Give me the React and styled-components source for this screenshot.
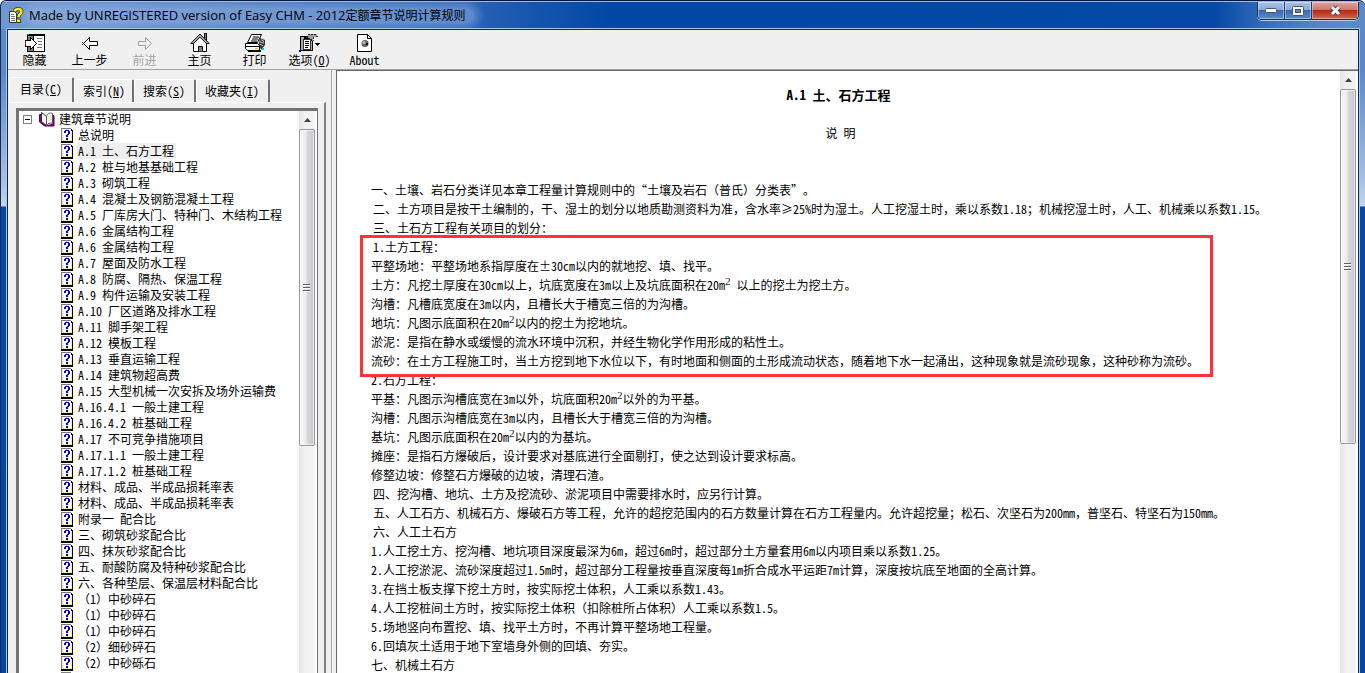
import { Fragment } from 'react'
import styled, { createGlobalStyle, css } from 'styled-components'

const GlobalStyle = createGlobalStyle`
  *,
  *::after {
    box-sizing: border-box;
  }
  body {
    margin: 0;
    overflow: hidden;
    color: #000;
    font-family: 'Noto Sans CJK SC', sans-serif;
    font-size: 12px;
    text-spacing-trim: space-all;
  }
  button {
    padding: 0;
    border: 0;
    background: none;
    color: inherit;
    font: inherit;
  }
  svg {
    display: block;
    flex: none;
  }
`

// half-width latin letters and digits, two per chinese character
const Half = styled.span`
  font-feature-settings: 'hwid';
`

const Window = styled.div`
  display: flex;
  flex-direction: column;
  height: 100vh;
  overflow: hidden;
  padding: 0 5px 0 1px;
  border-top: 1px solid #06163c;
  border-left: 1px solid #1b2a4c;
  border-radius: 6px 6px 0 0;
  background:
    linear-gradient(90deg, #6f97d2 0, #557fc4 14%, #2a62b6 34%, #0047a6 45%, #0449a6 89%, #3a70bc 93%, #5a86c8 97%, #5c89cb 100%) 0 0 / 100% 28px no-repeat,
    linear-gradient(180deg, #5b88ca 0, #5b88ca 70px, #a8c0e2 180px, #c4d5ee 205px, #0648a8 206px, #0046a6 100%);
`

const TitleBar = styled.header`
  display: flex;
  flex: none;
  height: 27px;
  padding: 0 1px 0 6px;
  border-top: 1px solid #9db9e4;
`

const Title = styled.h1`
  flex: 1;
  display: flex;
  align-items: center;
  gap: 4px;
  margin: 0;
  font-family: 'Open Sans', 'Noto Sans CJK SC', sans-serif;
  font-size: 13px;
  font-weight: 400;
`

const TitleText = styled.span`
  padding: 0 8px 0 1px;
  border-radius: 10px;
  background: rgba(170, 198, 236, 0.42);
  box-shadow: 0 0 10px 5px rgba(170, 198, 236, 0.42);
  line-height: 14px;
  small {
    font-size: 12px;
  }
`

const WindowButtons = styled.div`
  display: flex;
  height: 18px;
  border: 1px solid #16305e;
  border-top: 0;
  border-radius: 0 0 5px 5px;
  overflow: hidden;
  box-shadow: 0 1px 0 #b5cbea;
`

const WindowButton = styled.button`
  display: flex;
  align-items: center;
  justify-content: center;
  width: ${({ $close }) => ($close ? 46 : 27)}px;
  border-right: 1px solid #1f3d70;
  background: linear-gradient(180deg, #a9c0e2 0, #8aa9d6 48%, #3a68ae 50%, #5c8bcf 100%);
  box-shadow: inset 0 0 0 1px rgba(255, 255, 255, 0.4);
  ${({ $close }) => $close && css`
    border-right: 0;
    background: linear-gradient(180deg, #e0a49b 0, #cf7467 48%, #b22a18 50%, #d4684d 100%);
  `}
`

const Client = styled.div`
  flex: 1;
  min-height: 0;
  display: flex;
  flex-direction: column;
  margin-left: 4px;
  border: 1px solid #a9c6ec;
  border-bottom: 0;
  background: #f0f0f0;
`

const ClientInner = styled.div`
  flex: 1;
  min-height: 0;
  display: flex;
  flex-direction: column;
  border: 1px solid #0d2759;
  border-bottom: 0;
`

const Toolbar = styled.nav`
  display: flex;
  flex: none;
  gap: 2px;
  height: 40px;
  border-bottom: 1px solid #a0a0a0;
`

const ToolButton = styled.button`
  display: flex;
  flex-direction: column;
  align-items: center;
  width: 53px;
  padding-top: 3px;
  line-height: 14px;
  white-space: nowrap;
  &:disabled {
    color: #a0a0a0;
    text-shadow: 1px 1px 0 #fff;
  }
`

const Main = styled.div`
  flex: 1;
  min-height: 0;
  display: flex;
`

const Sidebar = styled.aside`
  flex: none;
  display: flex;
  flex-direction: column;
  width: 324px;
  padding: 7px 5px 0 1px;
  border-right: 1px solid #a0a0a0;
`

const Tabs = styled.div`
  display: flex;
  flex: none;
  align-items: flex-end;
  height: 25px;
`

const Tab = styled.button`
  height: ${({ $active }) => ($active ? 25 : 23)}px;
  padding: 0 8px ${({ $active }) => ($active ? 4 : 2)}px;
  width: ${({ $width }) => $width}px;
  text-align: left;
  white-space: nowrap;
  border-top: 1px solid #fff;
  border-left: 1px solid #fff;
  border-right: 2px solid #707070;
  border-radius: 2px 2px 0 0;
  ${({ $active }) => $active && css`padding-left: 10px;`}
`

const TabPanel = styled.section`
  flex: 1;
  min-height: 0;
  display: flex;
  padding: 5px 6px 0 7px;
  border-top: 1px solid #fff;
  border-right: 2px solid #808080;
`

const TreeBox = styled.div`
  flex: 1;
  min-width: 0;
  display: flex;
  overflow: hidden;
  border: solid #747474;
  border-width: 3px 1px 0 3px;
  padding-right: 2px;
  background: #fff;
`

const Tree = styled.ul`
  flex: 1;
  min-width: 0;
  margin: 0;
  padding: 0;
  list-style: none;
`

const TreeRow = styled.li`
  display: flex;
  align-items: center;
  gap: ${({ $root }) => ($root ? 4 : 3)}px;
  height: 16px;
  padding-left: ${({ $root }) => ($root ? 4 : 42)}px;
  line-height: 16px;
  white-space: nowrap;
`

const TreeLabel = styled.span`
  padding: 0 2px 0 ${({ $root }) => ($root ? 0 : 1)}px;
  background: ${({ $selected }) => ($selected ? '#efefef' : 'transparent')};
`

const ScrollTrack = styled.div`
  flex: none;
  display: flex;
  flex-direction: column;
  width: 16px;
  background: linear-gradient(90deg, #e6e6e6, #f2f2f2 40%, #f4f4f4);
`

const ScrollArrow = styled.button`
  display: flex;
  align-items: center;
  justify-content: center;
  height: 18px;
`

const ScrollThumb = styled.div`
  display: flex;
  align-items: center;
  justify-content: center;
  height: ${({ $size }) => $size}px;
  border: 1px solid #979797;
  border-radius: 2px;
  background: linear-gradient(90deg, #f8f8f8 0, #ececec 40%, #d6d6da 55%, #c6c6cc 100%);
  box-shadow: inset 0 0 0 1px rgba(255, 255, 255, 0.6);
`

const Splitter = styled.div`
  flex: none;
  width: 4px;
  border-left: 1px solid #fff;
`

const Viewer = styled.div`
  flex: 1;
  min-width: 0;
  display: flex;
  border: solid #696969;
  border-width: 1px 0 0 1px;
  padding-right: 2px;
  background: #fff;
`

const Article = styled.article`
  flex: 1;
  min-width: 0;
  padding: 14px 34px 0;
  overflow: hidden;
  line-height: 19px;
`

const Heading = styled.h2`
  margin: 0 0 19px;
  font-size: 13px;
  font-weight: 700;
  line-height: 19px;
  text-align: center;
`

const SubHeading = styled.p`
  margin: 0 0 38px;
  padding-left: 4px;
  text-align: center;
`

const Line = styled.p`
  margin: 0;
  padding-left: ${({ $indent }) => ($indent ? 2 : 0)}px;
  white-space: nowrap;
  sup {
    color: #2c1c1c;
    font-family: 'Liberation Serif', serif;
    font-size: 11px;
    line-height: 0;
  }
`

const Marked = styled.div`
  position: relative;
  &::after {
    content: '';
    position: absolute;
    top: -2px;
    left: -11px;
    width: 853px;
    height: 142px;
    border: 3px solid #fb3535;
    pointer-events: none;
  }
`

const topics = [
  '总说明',
  'A.1 土、石方工程',
  'A.2 桩与地基基础工程',
  'A.3 砌筑工程',
  'A.4 混凝土及钢筋混凝土工程',
  'A.5 厂库房大门、特种门、木结构工程',
  'A.6 金属结构工程',
  'A.6 金属结构工程',
  'A.7 屋面及防水工程',
  'A.8 防腐、隔热、保温工程',
  'A.9 构件运输及安装工程',
  'A.10 厂区道路及排水工程',
  'A.11 脚手架工程',
  'A.12 模板工程',
  'A.13 垂直运输工程',
  'A.14 建筑物超高费',
  'A.15 大型机械一次安拆及场外运输费',
  'A.16.4.1 一般土建工程',
  'A.16.4.2 桩基础工程',
  'A.17 不可竞争措施项目',
  'A.17.1.1 一般土建工程',
  'A.17.1.2 桩基础工程',
  '材料、成品、半成品损耗率表',
  '材料、成品、半成品损耗率表',
  '附录一 配合比',
  '三、砌筑砂浆配合比',
  '四、抹灰砂浆配合比',
  '五、耐酸防腐及特种砂浆配合比',
  '六、各种垫层、保温层材料配合比',
  '（1）中砂碎石',
  '（1）中砂碎石',
  '（1）中砂碎石',
  '（2）细砂碎石',
  '（2）中砂砾石',
  '',
]

// '^2' becomes a superscript, a leading '>' indents the line
const intro = [
  '一、土壤、岩石分类详见本章工程量计算规则中的“土壤及岩石（普氏）分类表”。',
  '>二、土方项目是按干土编制的，干、湿土的划分以地质勘测资料为准，含水率≥25%时为湿土。人工挖湿土时，乘以系数1.18；机械挖湿土时，人工、机械乘以系数1.15。',
  '>三、土石方工程有关项目的划分：',
]

const marked = [
  '>1.土方工程：',
  '平整场地：平整场地系指厚度在±30cm以内的就地挖、填、找平。',
  '土方：凡挖土厚度在30cm以上，坑底宽度在3m以上及坑底面积在20m^2 以上的挖土为挖土方。',
  '沟槽：凡槽底宽度在3m以内，且槽长大于槽宽三倍的为沟槽。',
  '地坑：凡图示底面积在20m^2以内的挖土为挖地坑。',
  '淤泥：是指在静水或缓慢的流水环境中沉积，并经生物化学作用形成的粘性土。',
  '流砂：在土方工程施工时，当土方挖到地下水位以下，有时地面和侧面的土形成流动状态，随着地下水一起涌出，这种现象就是流砂现象，这种砂称为流砂。',
]

const rest = [
  '2.石方工程：',
  '平基：凡图示沟槽底宽在3m以外，坑底面积20m^2以外的为平基。',
  '沟槽：凡图示沟槽底宽在3m以内，且槽长大于槽宽三倍的为沟槽。',
  '基坑：凡图示底面积在20m^2以内的为基坑。',
  '摊座：是指石方爆破后，设计要求对基底进行全面剔打，使之达到设计要求标高。',
  '修整边坡：修整石方爆破的边坡，清理石渣。',
  '>四、挖沟槽、地坑、土方及挖流砂、淤泥项目中需要排水时，应另行计算。',
  '>五、人工石方、机械石方、爆破石方等工程，允许的超挖范围内的石方数量计算在石方工程量内。允许超挖量；松石、次坚石为200mm，普坚石、特坚石为150mm。',
  '>六、人工土石方',
  '1.人工挖土方、挖沟槽、地坑项目深度最深为6m，超过6m时，超过部分土方量套用6m以内项目乘以系数1.25。',
  '2.人工挖淤泥、流砂深度超过1.5m时，超过部分工程量按垂直深度每1m折合成水平运距7m计算，深度按坑底至地面的全高计算。',
  '3.在挡土板支撑下挖土方时，按实际挖土体积，人工乘以系数1.43。',
  '4.人工挖桩间土方时，按实际挖土体积（扣除桩所占体积）人工乘以系数1.5。',
  '5.场地竖向布置挖、填、找平土方时，不再计算平整场地工程量。',
  '6.回填灰土适用于地下室墙身外侧的回填、夯实。',
  '七、机械土石方',
]

const tabs = [
  { text: '目录', accel: 'C', width: 65, active: true },
  { text: '索引', accel: 'N', width: 60 },
  { text: '搜索', accel: 'S', width: 62 },
  { text: '收藏夹', accel: 'I', width: 74 },
]

const AppIcon = () => (
  <svg width="16" height="16" viewBox="0 0 16 16">
    <path d="M1.500 4.500h5l2 2v9h-7z" fill="#fff" stroke="#333" />
    <path d="M3 7.500h3M3 9.500h4M3 11.500h4M3 13.500h4" stroke="#777" />
    <path d="M6.500 4C7.500 2 9 1.800 11 2c2.500.5 3 2.500 2 4-1 1.500-2.500 1.500-2.500 4.500" fill="none" stroke="#3a3500" strokeWidth="4" />
    <path d="M6.500 4C7.500 2 9 1.800 11 2c2.500.5 3 2.500 2 4-1 1.500-2.500 1.500-2.500 4" fill="none" stroke="#ffee1a" strokeWidth="2.500" />
    <path d="M8.500 12h4v3.500h-4z" fill="#ffee1a" stroke="#3a3500" />
  </svg>
)

const HideIcon = () => (
  <svg width="20" height="20" viewBox="0 0 20 20" shapeRendering="crispEdges">
    <path d="M2 1h18v18H2z" fill="#000" />
    <path d="M3 3h5v15H3z" fill="#808080" />
    <path d="M9 3h10v15H9z" fill="#fff" />
    <path d="M12 5.500h5M13 8.500h4M13 11.500h4M12 14.500h5" stroke="#777" />
    <path d="M0 7h5V4h1v1h1v1h1v1h1v1h1v1h1v1h1v1h-1v1h-1v1H9v1H8v1H7v1H6v1H5v-3H0z" fill="#000" />
    <path d="M1 8h5V6h1v1h1v1h1v1h1v1h1v1h-1v1H9v1H8v1H7v1H6v-2H1z" fill="#fff" />
    <path d="M2 1h2v1H2z" fill="#008000" />
    <path d="M0 8h1v4H0z" fill="#c00000" />
  </svg>
)

const ArrowIcon = ({ forward }) => (
  <svg width="20" height="20" viewBox="0 -1 20 20">
    {forward ? (
      <>
        <path d="M4 8.500h7v-4l6.500 6-6.500 6v-4H4z" fill="none" stroke="#fff" />
        <path d="M3.500 7.500h7v-4l6 6-6 6v-4h-7z" fill="#f0f0f0" stroke="#a0a0a0" />
      </>
    ) : (
      <>
        <path d="M17.500 7.500h-8v-4L3.500 9.500l6 6v-4h8z" fill="#fff" stroke="#000" />
        <path d="M2 8h1v1H2zM2 10h1v1H2z" fill="#c00000" />
        <path d="M3 9h1v1H3z" fill="#008000" />
      </>
    )}
  </svg>
)

const HomeIcon = () => (
  <svg width="20" height="20" viewBox="0 0 20 20">
    <path d="M14.500 .5h2v8l-2-2z" fill="#808080" stroke="#000" />
    <path d="M3.500 10v8.500h13V10L10 3.500z" fill="#fff" stroke="#000" />
    <path d="M.7 10.500L10 1l9.300 9.500h-3L10 4.200 3.700 10.500z" fill="#a8a8a8" stroke="#000" strokeWidth="0.900" />
    <path d="M8.500 18.500v-5h4v5" fill="#808080" stroke="#000" />
  </svg>
)

const PrintIcon = () => (
  <svg width="20" height="20" viewBox="0 0 20 20">
    <path d="M6.500 1.500h10l-4 8h-10z" fill="#fff" stroke="#000" />
    <path d="M8 4h6M7 6h6M6 8h6" stroke="#000" />
    <path d="M15 5l5 2v5l-4 5-2-6z" fill="#333" />
    <path d="M16 6.500l3 2M15 9l4 1M15 11.500l3 1" stroke="#ccc" />
    <path d="M.5 10.500h12l2 2v5h-12l-2-2z" fill="#fff" stroke="#000" />
    <path d="M1 13.500h13" stroke="#000" />
    <path d="M3 18h13" stroke="#000" strokeWidth="2" />
    <path d="M17 15h2v2h-2z" fill="#00d0d0" />
    <path d="M10 15h3v1h-3z" fill="#d0d000" />
  </svg>
)

const OptionsIcon = () => (
  <svg width="22" height="20" viewBox="0 0 22 20" shapeRendering="crispEdges">
    <path d="M1 3h13v15H1z" fill="#000" />
    <path d="M2 4h11v13H2z" fill="#a8a8a8" />
    <path d="M4 6h7v10H4z" fill="#fff" stroke="#333" />
    <path d="M5 4h5v2H5z" fill="#000" />
    <path d="M6 8.500h4M6 10.500h4M6 12.500h4M6 14.500h3" stroke="#000" />
    <path d="M9 1h9v3h-3l-1 4-2-1V5H9z" fill="#a0a0a0" />
    <path d="M9 1.500h9M9 5.500h3M12.500 6v2M14.500 4v4M17 3.500h2" stroke="#222" strokeDasharray="2 1" />
    <path d="M0 17h2v2H0z" fill="#0000c0" />
    <path d="M16 10h5v1h-1v1h-1v1h-1v-1h-1v-1h-1z" fill="#000" />
  </svg>
)

const AboutIcon = () => (
  <svg width="20" height="20" viewBox="0 0 20 20">
    <path d="M2.500 1.500h10l4 4v13h-14z" fill="#fff" stroke="#000" />
    <path d="M12.500 1.500v4h4" fill="none" stroke="#000" />
    <circle cx="10" cy="10.500" r="3.500" fill="#606060" />
    <circle cx="9" cy="9.500" r="1.500" fill="#c0c0c0" />
    <path d="M11 10h2v2h-2z" fill="#111" />
  </svg>
)

const BookIcon = () => (
  <svg width="16" height="16" viewBox="0 0 16 16">
    <path d="M.5 3.500h2v8.500l5 2.500 6-1V4.500h1.500v10.500H5.500l-5-4z" fill="#800080" stroke="#600060" />
    <path d="M2.500 1.500l5 4v9l-5-4z" fill="#fff" stroke="#333" />
    <path d="M7.500 5.500c1-3 3-4 6-3v10c-3-1-5 0-6 2z" fill="#fff" stroke="#555" />
    <path d="M10 5v6M12 4v7" stroke="#d8d060" strokeDasharray="1 1" />
  </svg>
)

const TopicIcon = () => (
  <svg width="13" height="15" viewBox="0 0 13 15" shapeRendering="crispEdges">
    <path d="M0 0h10v1h1v1h1v12.500H0z" fill="#000" />
    <path d="M0 0h10v1H1v12H0z" fill="#808080" />
    <path d="M1 1h9v2h1v10H1z" fill="#fff" />
    <path d="M1 1.500h8M2 12.500h9M1.500 3v10M10.500 4v8" stroke="#f0e060" strokeDasharray="1 1" />
    <path d="M4 2h4v1H4zM3 3h2v2H3zM7 3h2v3H7zM6 6h2v1H6zM5 7h2v2H5zM5 10h2v2H5z" fill="#0000f0" />
  </svg>
)

const MinusBox = () => (
  <svg width="12" height="9" viewBox="0 0 12 9" shapeRendering="crispEdges">
    <rect x="0.500" y="0.500" width="8" height="8" fill="#fff" stroke="#808080" />
    <path d="M2 4.500h5" stroke="#000" />
  </svg>
)

const Accel = ({ letter }) => <Half>(<u>{letter}</u>)</Half>

const toolButtons = [
  { label: '隐藏', icon: <HideIcon /> },
  { label: '上一步', icon: <ArrowIcon /> },
  { label: '前进', icon: <ArrowIcon forward />, disabled: true },
  { label: '主页', icon: <HomeIcon /> },
  { label: '打印', icon: <PrintIcon /> },
  { label: <>选项<Accel letter="O" /></>, icon: <OptionsIcon /> },
  { label: <Half>About</Half>, icon: <AboutIcon /> },
]

const Scrollbar = ({ size }) => (
  <ScrollTrack>
    <ScrollArrow aria-label="Scroll up">
      <svg width="7" height="4" viewBox="0 0 7 4">
        <path d="M0 4l3.500-4L7 4z" fill="#404040" />
      </svg>
    </ScrollArrow>
    <ScrollThumb $size={size}>
      <svg width="8" height="8" viewBox="0 0 8 8" shapeRendering="crispEdges">
        <path d="M0 1.500h7M0 4.500h7M0 7.500h7" stroke="#fff" />
        <path d="M0 .5h7M0 3.500h7M0 6.500h7" stroke="#606060" />
      </svg>
    </ScrollThumb>
  </ScrollTrack>
)

const Text = ({ children }) => children.split(/([\x20-\x7e]+)/).map((run, i) => (
  i % 2 ? <Half key={i}>{run}</Half> : run
))

const Lines = ({ items }) => items.map((item, i) => {
  const parts = item.replace(/^>/, '').split('^2')

  return (
    <Line key={i} $indent={item.startsWith('>')}>
      {parts.map((part, j) => (
        <Fragment key={j}>
          {j > 0 && <sup>2</sup>}
          <Text>{part}</Text>
        </Fragment>
      ))}
    </Line>
  )
})

export default function App() {
  return (
    <>
      <GlobalStyle />
      <Window>
        <TitleBar>
          <Title>
            <AppIcon />
            <TitleText>
              Made by UNREGISTERED version of Easy CHM - 2012<small>定额章节说明计算规则</small>
            </TitleText>
          </Title>
          <WindowButtons>
            <WindowButton aria-label="Minimize">
              <svg width="12" height="5" viewBox="0 0 12 5">
                <rect x="0.500" y="0.500" width="11" height="4" rx="1" fill="#fff" stroke="#4a5468" />
              </svg>
            </WindowButton>
            <WindowButton aria-label="Maximize">
              <svg width="12" height="10" viewBox="0 0 12 10">
                <rect x="0.500" y="0.500" width="11" height="9" rx="1" fill="#fff" stroke="#4a5468" />
                <rect x="3.500" y="3.500" width="5" height="3" fill="#5c86c4" stroke="#4a5468" />
              </svg>
            </WindowButton>
            <WindowButton $close aria-label="Close">
              <svg width="13" height="11" viewBox="0 0 13 11">
                <path d="M3 2l7 7M10 2L3 9" stroke="#5a3c44" strokeWidth="5" />
                <path d="M3 2l7 7M10 2L3 9" stroke="#fff" strokeWidth="3" />
              </svg>
            </WindowButton>
          </WindowButtons>
        </TitleBar>
        <Client>
          <ClientInner>
            <Toolbar>
              {toolButtons.map(({ label, icon, disabled }, i) => (
                <ToolButton key={i} disabled={disabled}>
                  {icon}
                  <span>{label}</span>
                </ToolButton>
              ))}
            </Toolbar>
            <Main>
              <Sidebar>
                <Tabs role="tablist">
                  {tabs.map(({ text, accel, width, active }) => (
                    <Tab key={text} role="tab" aria-selected={!!active} $active={active} $width={width}>
                      {text}<Accel letter={accel} />
                    </Tab>
                  ))}
                </Tabs>
                <TabPanel>
                  <TreeBox>
                    <Tree>
                      <TreeRow $root>
                        <MinusBox />
                        <BookIcon />
                        <TreeLabel $root>建筑章节说明</TreeLabel>
                      </TreeRow>
                      {topics.map((topic, i) => (
                        <TreeRow key={i}>
                          <TopicIcon />
                          <TreeLabel $selected={i === 1}><Text>{topic}</Text></TreeLabel>
                        </TreeRow>
                      ))}
                    </Tree>
                    <Scrollbar size={317} />
                  </TreeBox>
                </TabPanel>
              </Sidebar>
              <Splitter />
              <Viewer>
                <Article>
                  <Heading><Text>A.1 土、石方工程</Text></Heading>
                  <SubHeading><Text>说 明</Text></SubHeading>
                  <Lines items={intro} />
                  <Marked>
                    <Lines items={marked} />
                  </Marked>
                  <Lines items={rest} />
                </Article>
                <Scrollbar size={355} />
              </Viewer>
            </Main>
          </ClientInner>
        </Client>
      </Window>
    </>
  )
}
